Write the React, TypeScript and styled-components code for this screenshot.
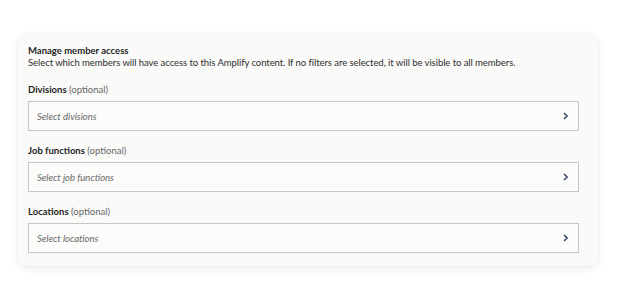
import styled, { createGlobalStyle } from 'styled-components';

const GlobalStyle = createGlobalStyle`
  html, body {
    margin: 0;
    padding: 0;
    background: #ffffff;
  }
  body {
    font-family: Lato, 'Open Sans', sans-serif;
    -webkit-font-smoothing: antialiased;
  }
`;

interface FilterField {
  label: string;
  placeholder: string;
}

const fields: FilterField[] = [
  { label: 'Divisions', placeholder: 'Select divisions' },
  { label: 'Job functions', placeholder: 'Select job functions' },
  { label: 'Locations', placeholder: 'Select locations' },
];

export default function App() {
  return (
    <>
      <GlobalStyle />
      <Page>
        <Card>
          <Header>
            <Title>Manage member access</Title>
            <Description>
              Select which members will have access to this Amplify content. If no filters are
              selected, it will be visible to all members.
            </Description>
          </Header>
          <Fields>
            {fields.map(({ label, placeholder }) => (
              <Field key={label}>
                <Label>
                  <strong>{label}</strong> <Optional>(optional)</Optional>
                </Label>
                <Select type='button'>
                  <Placeholder>{placeholder}</Placeholder>
                  <Chevron viewBox='0 0 6 8' aria-hidden>
                    <path d='M1.5 1.5 L4.2 4 L1.5 6.5' />
                  </Chevron>
                </Select>
              </Field>
            ))}
          </Fields>
        </Card>
      </Page>
    </>
  );
}

const Page = styled.div`
  width: 620px;
  height: 295px;
  box-sizing: border-box;
  padding: 35px 22px 0 18px;
`;

const Card = styled.section`
  background: #fafaf8;
  border-radius: 10px;
  box-shadow: 0 2px 10px rgba(0, 0, 0, 0.09), 0 0 2px rgba(0, 0, 0, 0.04);
  padding: 10px 19px 13px 10px;
  display: flex;
  flex-direction: column;
  gap: 15px;
`;

const Header = styled.div`
  display: flex;
  flex-direction: column;
  font-size: 9.5px;
  line-height: 12px;
`;

const Title = styled.h2`
  margin: 0;
  font-size: 9.5px;
  font-weight: 700;
  color: #1f1f1f;
`;

const Description = styled.p`
  margin: 0;
  color: #2e2e2e;
  letter-spacing: -0.06px;
`;

const Fields = styled.div`
  display: flex;
  flex-direction: column;
  gap: 14px;
`;

const Field = styled.div`
  display: flex;
  flex-direction: column;
  gap: 5px;
`;

const Label = styled.label`
  font-size: 9.5px;
  line-height: 12px;
  color: #1f1f1f;
  strong {
    font-weight: 700;
  }
`;

const Optional = styled.span`
  color: #666666;
`;

const Select = styled.button`
  all: unset;
  box-sizing: border-box;
  height: 30px;
  width: 100%;
  border: 1px solid #c6c6c4;
  background: #fcfcfb;
  display: flex;
  align-items: center;
  justify-content: space-between;
  padding: 0 9px 0 8px;
  cursor: pointer;
`;

const Placeholder = styled.span`
  font-family: Lato, 'Open Sans', sans-serif;
  font-style: italic;
  font-size: 9.5px;
  color: #666666;
`;

const Chevron = styled.svg`
  width: 6px;
  height: 8px;
  fill: none;
  stroke: #3b4a6b;
  stroke-width: 1.7;
  stroke-linecap: round;
  stroke-linejoin: round;
`;
